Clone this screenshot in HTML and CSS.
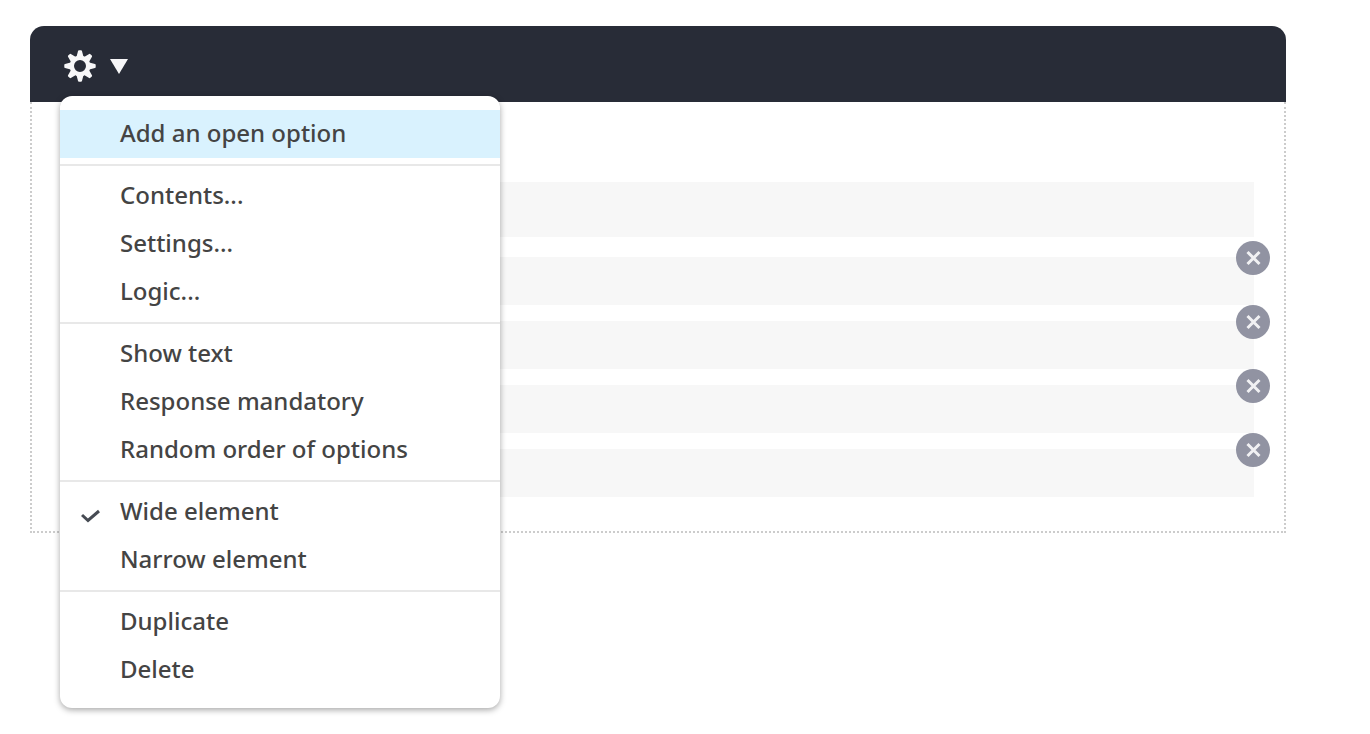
FILE: index.html
```html
<!DOCTYPE html>
<html lang="en">
<head>
    <meta charset="UTF-8">
    <meta name="viewport" content="width=device-width, initial-scale=1.0">
    <title>Question editor</title>
    <link rel="stylesheet" href="styles.css">
</head>
<body>
    <div class="element">
        <div class="element-header">
            <button type="button" class="menu-toggle" aria-label="Element menu" aria-expanded="true">
                <svg class="gear" viewBox="0 0 32 32" width="32" height="32">
                    <circle cx="16" cy="16" r="8.2" fill="none" stroke="#f7f7f8" stroke-width="4.4"/>
                    <g fill="#f7f7f8" stroke="#f7f7f8" stroke-width="2" stroke-linejoin="round">
                        <path id="tooth" d="M13.500 7L15 1.300h2L18.500 7z"/>
                        <use href="#tooth" transform="rotate(45 16 16)"/>
                        <use href="#tooth" transform="rotate(90 16 16)"/>
                        <use href="#tooth" transform="rotate(135 16 16)"/>
                        <use href="#tooth" transform="rotate(180 16 16)"/>
                        <use href="#tooth" transform="rotate(225 16 16)"/>
                        <use href="#tooth" transform="rotate(270 16 16)"/>
                        <use href="#tooth" transform="rotate(315 16 16)"/>
                    </g>
                </svg>
                <svg class="arrow" viewBox="0 0 18 15" width="18" height="15">
                    <path d="M0 0h18L9 15z" fill="#f7f7f8"/>
                </svg>
            </button>
            <div class="menu">
                <div class="menu-group">
                    <button type="button" class="menu-item active">Add an open option</button>
                </div>
                <div class="menu-group">
                    <button type="button" class="menu-item">Contents...</button>
                    <button type="button" class="menu-item">Settings...</button>
                    <button type="button" class="menu-item">Logic...</button>
                </div>
                <div class="menu-group">
                    <button type="button" class="menu-item">Show text</button>
                    <button type="button" class="menu-item">Response mandatory</button>
                    <button type="button" class="menu-item">Random order of options</button>
                </div>
                <div class="menu-group">
                    <button type="button" class="menu-item">
                        <svg class="check" viewBox="0 0 20 16" width="20" height="16">
                            <path d="M1 7l6 5.500L18 3" fill="none" stroke="#464b53" stroke-width="3"/>
                        </svg>
                        Wide element
                    </button>
                    <button type="button" class="menu-item">Narrow element</button>
                </div>
                <div class="menu-group">
                    <button type="button" class="menu-item">Duplicate</button>
                    <button type="button" class="menu-item">Delete</button>
                </div>
            </div>
        </div>
        <div class="element-body">
            <input type="text" class="field question" aria-label="Question">
            <div class="option">
                <input type="text" class="field" aria-label="Option 1">
                <button type="button" class="remove" aria-label="Remove option 1">
                    <svg viewBox="0 0 34 34" width="34" height="34"><path d="M11.500 11l12 12M23.500 11l-12 12"/></svg>
                </button>
            </div>
            <div class="option">
                <input type="text" class="field" aria-label="Option 2">
                <button type="button" class="remove" aria-label="Remove option 2">
                    <svg viewBox="0 0 34 34" width="34" height="34"><path d="M11.500 11l12 12M23.500 11l-12 12"/></svg>
                </button>
            </div>
            <div class="option">
                <input type="text" class="field" aria-label="Option 3">
                <button type="button" class="remove" aria-label="Remove option 3">
                    <svg viewBox="0 0 34 34" width="34" height="34"><path d="M11.500 11l12 12M23.500 11l-12 12"/></svg>
                </button>
            </div>
            <div class="option">
                <input type="text" class="field" aria-label="Option 4">
                <button type="button" class="remove" aria-label="Remove option 4">
                    <svg viewBox="0 0 34 34" width="34" height="34"><path d="M11.500 11l12 12M23.500 11l-12 12"/></svg>
                </button>
            </div>
        </div>
    </div>
</body>
</html>
```
FILE: styles.css
```css
* {
    box-sizing: border-box;
}
body {
    min-height: 100vh;
    margin: 0;
    padding: 26px 84px 20px 30px;
    background-color: #fff;
    color: #444;
    font-family: 'Noto Sans', sans-serif;
    font-size: 24px;
    font-weight: 500;
}
button {
    padding: 0;
    border: none;
    background: none;
    color: inherit;
    font: inherit;
    cursor: pointer;
}
svg {
    display: block;
}
.element-header {
    position: relative;
    display: flex;
    align-items: center;
    height: 76px;
    padding: 4px 34px 0;
    border-radius: 14px 14px 0 0;
    background-color: #282c37;
}
.menu-toggle {
    display: flex;
    align-items: center;
    gap: 14px;
}

/* drop-down menu */
.menu {
    position: absolute;
    top: 70px;
    left: 30px;
    z-index: 2;
    width: 440px;
    padding: 14px 0;
    border-radius: 12px;
    background-color: #fff;
    box-shadow: 0 2px 6px rgba(0, 0, 0, 0.35);
}
.menu-group + .menu-group {
    margin-top: 6px;
    padding-top: 6px;
    border-top: 2px solid #e8e8e8;
}
.menu-item {
    position: relative;
    display: block;
    width: 100%;
    height: 48px;
    padding: 0 60px 2px;
    line-height: 46px;
    text-align: left;
}
.menu-item.active,
.menu-item:hover {
    background-color: #d9f2fe;
}
.check {
    position: absolute;
    top: 20px;
    left: 21px;
}

.element-body {
    padding: 80px 30px 34px;
    border: 2px dotted #ccc;
    border-top: none;
}
.field {
    display: block;
    width: 100%;
    height: 48px;
    padding: 0 16px;
    border: none;
    background-color: #f7f7f7;
    color: inherit;
    font: inherit;
}
.question {
    height: 55px;
    margin-bottom: 20px;
}
.option {
    position: relative;
}
.option + .option {
    margin-top: 16px;
}
.remove {
    position: absolute;
    top: -16px;
    right: -16px;
    border-radius: 50%;
    background-color: #9193a2;
}
.remove path {
    fill: none;
    stroke: #f1f1f3;
    stroke-width: 3;
}
```
